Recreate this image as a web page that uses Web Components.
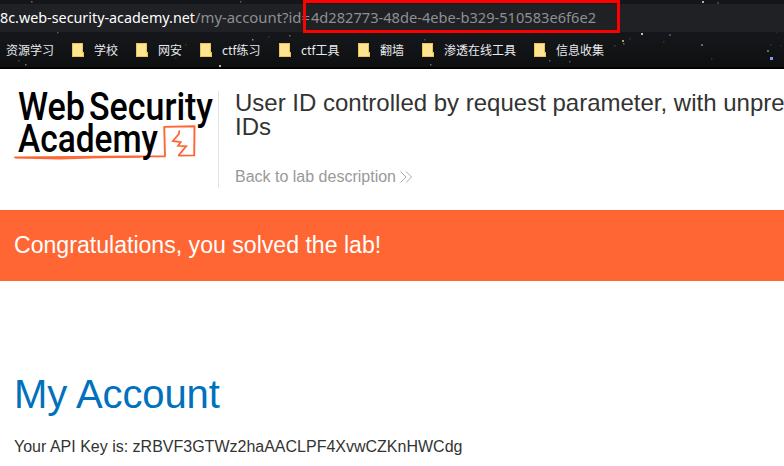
<!DOCTYPE html>
<html lang="zh-CN">
<head>
<meta charset="utf-8">
<title>My Account</title>
<style>
html, body { margin: 0; height: 466px; overflow: hidden; background: #fff; font-family: "Liberation Sans", Arial, sans-serif; color: #333332; }
</style>
</head>
<body>
<lab-page></lab-page>
<script>
const define = (name, html, setup) => customElements.define(name, class extends HTMLElement {
  constructor() {
    super();
    this.attachShadow({ mode: 'open' }).innerHTML = html;
  }
  connectedCallback() { if (setup) setup(this, this.shadowRoot); }
});

// One line of text set to a given width.
define('fit-text', `<style>:host{display:block;flex:none}svg{display:block;overflow:visible}text{fill:currentColor}</style>
<svg height="20"><text y="15" lengthAdjust="spacingAndGlyphs"></text></svg>`, (el, root) => {
  const w = el.getAttribute('width');
  root.querySelector('svg').setAttribute('width', w);
  const t = root.querySelector('text');
  t.textContent = el.getAttribute('text');
  t.setAttribute('textLength', el.getAttribute('ink') || w);
});

// Faint stars of the browser theme.
define('star-field', `<style>:host{position:absolute;inset:0;pointer-events:none}svg{display:block}</style><svg width="784" height="69"></svg>`, (el, root) => {
  const stars = [[31,1,'#66686e'],[240,1,'#5a5c60'],[57,32,'#55575c'],[18,60,'#44464a'],[25,64,'#77797e'],[185,44,'#33353a'],[252,39,'#8a8c96'],[268,36,'#26306a'],[289,35,'#66686e'],[175,57,'#303236'],[219,65,'#b0b0b4',2],[424,39,'#3a4c78'],[430,64,'#66686e'],[549,60,'#55575c'],[569,61,'#55575c'],[622,40,'#a8a264',2],[623,43,'#66686e'],[614,45,'#44464a'],[629,38,'#333539'],[641,33,'#b6bdd6',2],[669,34,'#33507a',2],[702,1,'#a8b2ca',2],[717,2,'#2c3e68',2],[663,41,'#333539'],[701,44,'#66686e',2],[711,58,'#333539'],[767,50,'#6e6c4c',2],[770,57,'#7e9ff0',3],[776,32,'#1c2458'],[770,44,'#333539'],[780,45,'#1c2458'],[330,56,'#2b2d32']];
  root.querySelector('svg').innerHTML = stars.map(([x, y, c, s = 1.5]) => `<rect x="${x}" y="${y}" width="${s}" height="${s}" fill="${c}"/>`).join('');
});

define('address-bar', `<style>
:host{display:flex;position:relative;height:28px;margin-top:4px;background:#202124;font:15px "Noto Sans","Open Sans",sans-serif;color:#8d9093;padding-top:4px;box-sizing:border-box}
.host{color:#fff}
.mark{position:absolute;left:303px;top:-4px;width:317px;height:37px;box-sizing:border-box;border:3px solid #f00;height:33px}
</style>
<fit-text class="host" width="195" text="8c.web-security-academy.net"></fit-text>
<fit-text width="116" ink="115" text="/my-account?id="></fit-text>
<fit-text width="285" text="4d282773-48de-4ebe-b329-510583e6f6e2"></fit-text>
<div class="mark"></div>`);

define('bookmark-item', `<style>
:host{display:flex;align-items:center;gap:10px;font:12px/18px "Noto Sans CJK SC",sans-serif;color:#e8eaed;white-space:nowrap}
svg{display:block}
:host([plain]) svg{display:none}
span{display:block;width:var(--w)}
</style>
<svg width="12" height="14"><path d="M0 0h11v9h1v5H0z" fill="#e9c652"/><path d="M1 1h9v12H1z" fill="#ffe491"/><path d="M10 10h1v3h-1z" fill="#ffe491"/></svg>
<span><slot></slot></span>`);

define('bookmarks-bar', `<style>
:host{display:flex;position:relative;align-items:center;gap:18px;height:36px;padding-left:6px;box-sizing:border-box}
</style>
<bookmark-item plain style="--w:48px">资源学习</bookmark-item>
<bookmark-item style="--w:24px">学校</bookmark-item>
<bookmark-item style="--w:24px">网安</bookmark-item>
<bookmark-item style="--w:39px">ctf练习</bookmark-item>
<bookmark-item style="--w:39px">ctf工具</bookmark-item>
<bookmark-item style="--w:24px">翻墙</bookmark-item>
<bookmark-item style="--w:72px">渗透在线工具</bookmark-item>
<bookmark-item style="--w:48px">信息收集</bookmark-item>`);

define('browser-chrome', `<style>
:host{display:flow-root;position:relative;height:69px;background:linear-gradient(#14161a,#141619 55%,#0d0f11 97%,#000 98%);overflow:hidden}
</style><star-field></star-field><address-bar></address-bar><bookmarks-bar></bookmarks-bar>`);

define('academy-logo', `<style>:host{display:block;flex:none}svg{display:block;overflow:visible}text{font:500 38px "DIN","Roboto",sans-serif;fill:#000}</style>
<svg width="204" height="97" viewBox="14 91 204 97">
<g fill="none" stroke="#ff6633" stroke-linejoin="round" stroke-linecap="round">
<path d="M15 157.4L165 156.2L164.2 126.9L194.5 126.3L194.2 155.4L179 155.6" stroke-width="1.9"/>
<path d="M16 157.8L60 158.7L100 157.5L140 157" stroke-width="1.6"/>
<path d="M179.3 131.2L178.8 134L172.8 141L180.7 142.2L178 145.8L186.2 146.3L178.8 155.2" stroke-width="1.8" stroke-linejoin="miter"/>
</g>
<text x="18" y="119.7" textLength="67" lengthAdjust="spacingAndGlyphs">Web</text>
<text x="89" y="119.7" textLength="124" lengthAdjust="spacingAndGlyphs">Security</text>
<text x="18" y="152" textLength="140" lengthAdjust="spacingAndGlyphs">Academy</text>
</svg>`);

define('lab-header', `<style>
:host{display:flex;height:141px;padding:22px 0 0 14px;box-sizing:border-box}
.info{height:97px;border-left:1px solid #e3e3e3;padding-left:16px;box-sizing:border-box;white-space:nowrap}
h2{font-weight:400;font-size:24px;line-height:24px;margin:0;color:#333332}
a{display:flex;align-items:center;gap:4px;margin-top:29px;font-size:16px;line-height:18px;color:#999}
svg{margin-top:-1px}
</style>
<academy-logo></academy-logo>
<div class="info"><h2>User ID controlled by request parameter, with unpre<br>IDs</h2>
<a>Back to lab description<svg width="12" height="12" fill="none" stroke="#aaa"><path d="M.5.5L6 6L.5 11.5M6 .5L11.5 6L6 11.5"/></svg></a></div>`);

define('solved-banner', `<style>
:host{display:flex;align-items:center;height:71px;background:#ff6633;color:#fff;padding:0 14px;box-sizing:border-box;font-size:23.1px}
</style><slot></slot>`);

define('account-details', `<style>
:host{display:block;padding:90px 14px 0}
h1{font-weight:400;font-size:40px;line-height:46px;margin:0;color:#0071bd;letter-spacing:-.1px}
p{margin:21px 0 0;font-size:16px;line-height:18px}
</style><h1>My Account</h1><p><slot></slot></p>`);

define('lab-page', `<style>:host{display:block;width:784px;height:466px;overflow:hidden}</style>
<browser-chrome></browser-chrome>
<lab-header></lab-header>
<solved-banner>Congratulations, you solved the lab!</solved-banner>
<account-details>Your API Key is: zRBVF3GTWz2haAACLPF4XvwCZKnHWCdg</account-details>`);
</script>
</body>
</html>
